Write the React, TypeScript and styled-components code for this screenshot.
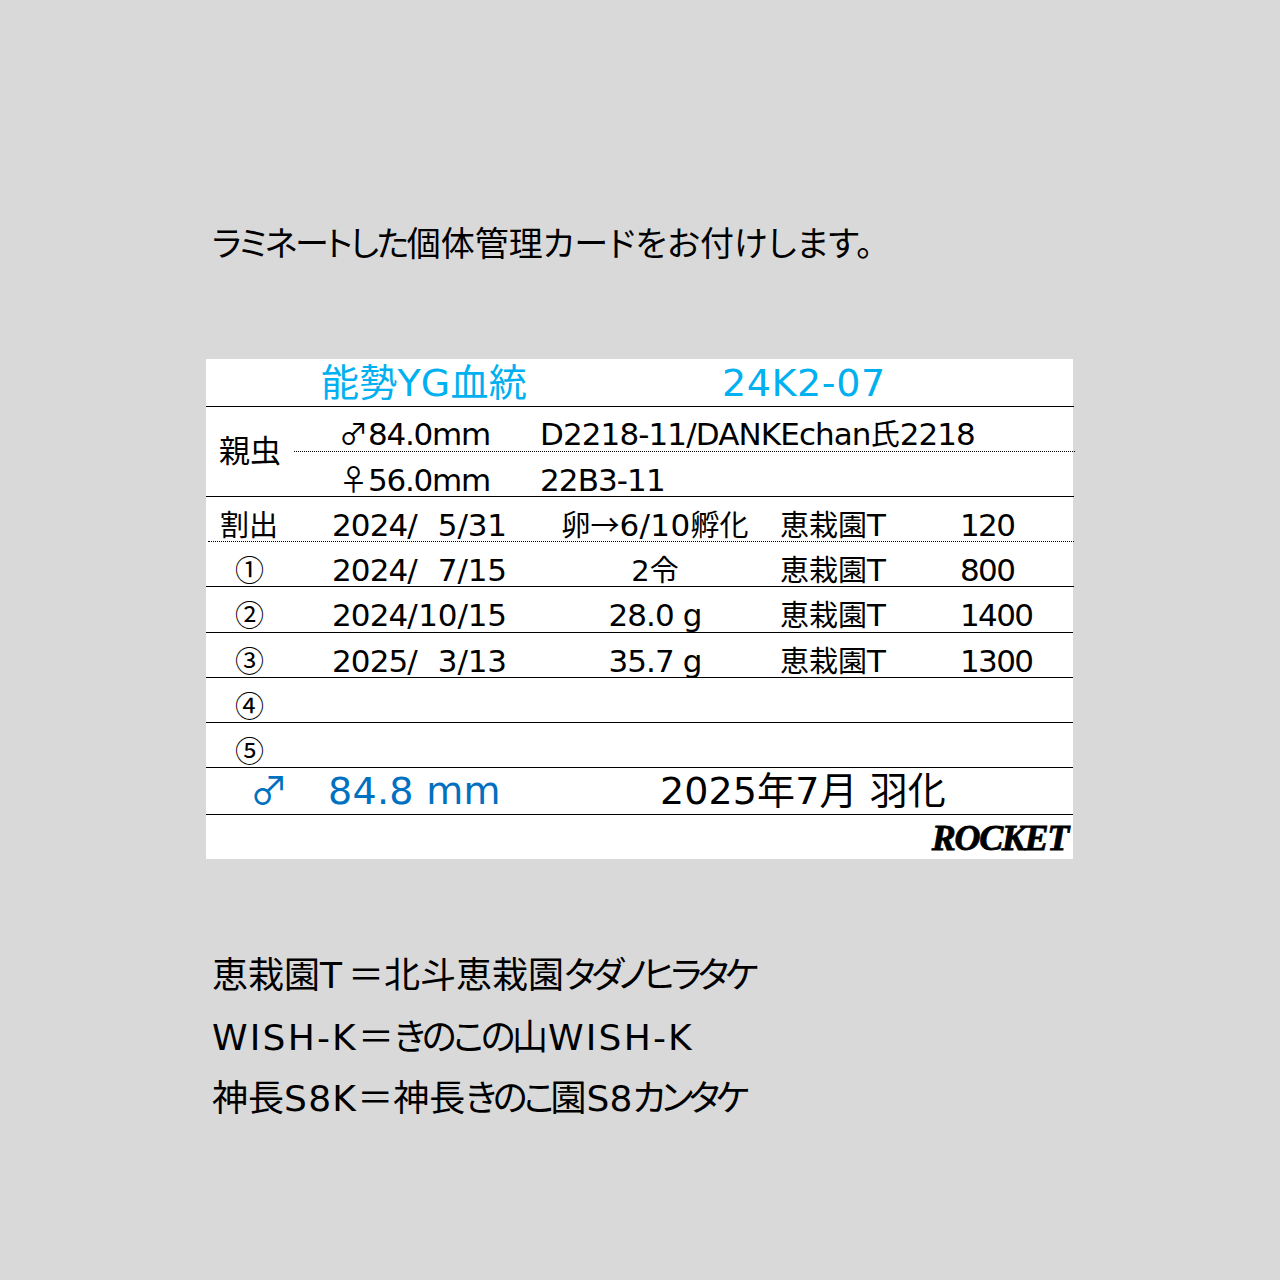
import React from "react";
import styled, { createGlobalStyle } from "styled-components";

const Global = createGlobalStyle`
  html, body { margin: 0; padding: 0; background: #d9d9d9; }
`;

const SANS = `"DejaVu Sans", "Noto Sans CJK JP", sans-serif`;
const CJK = `"Noto Sans CJK JP", sans-serif`;

const Page = styled.div`
  width: 1280px;
  height: 1280px;
  box-sizing: border-box;
  padding: 211px 0 0 206px;
  background: #d9d9d9;
  font-family: ${SANS};
  color: #000;
  overflow: hidden;
`;

const Heading = styled.div`
  padding-left: 6px;
  height: 148px;
  font-family: ${CJK};
  font-size: 34px;
  line-height: 62px;
  font-feature-settings: "palt";
  white-space: nowrap;
`;

const Spaced = styled.span<{ $gap: number }>`
  letter-spacing: ${(p) => p.$gap}px;
`;

const Card = styled.div`
  width: 867px;
  height: 500px;
  background: #fff;
  display: flex;
  flex-direction: column;
`;

const Rule = styled.div<{ $dotted?: boolean; $overhang?: boolean; $inset?: number }>`
  flex: none;
  box-sizing: border-box;
  margin-left: ${(p) => p.$inset ?? 0}px;
  margin-right: ${(p) => (p.$overhang ? -1 : 0)}px;
  border-bottom: 1px ${(p) => (p.$dotted ? "dotted" : "solid")} #000;
`;

const TitleRow = styled(Rule)`
  height: 48px;
  padding-top: 5px;
  display: grid;
  grid-template-columns: 516px 1fr;
  align-items: baseline;
  font-size: 38px;
  line-height: 38px;
  color: #00b0f0;
  white-space: nowrap;
`;

const Blood = styled.div`
  padding-left: 115px;
  letter-spacing: 0.2px;
`;

const Code = styled.div`
  letter-spacing: 0.6px;
`;

const ParentBlock = styled(Rule)`
  height: 90px;
  display: grid;
  grid-template-columns: 88px 1fr;
`;

const ParentLabel = styled.div`
  display: flex;
  align-items: center;
  padding-left: 13px;
  padding-bottom: 7px;
  font-family: ${CJK};
  font-size: 31px;
`;

const ParentLines = styled.div`
  display: flex;
  flex-direction: column;
`;

const ParentLine = styled.div<{ $dotted?: boolean; $top: number }>`
  height: 45px;
  box-sizing: border-box;
  padding-top: ${(p) => p.$top}px;
  margin-right: -1px;
  display: grid;
  grid-template-columns: 246px 1fr;
  align-items: baseline;
  font-size: 31px;
  line-height: 29px;
  letter-spacing: -0.9px;
  white-space: nowrap;
  ${(p) => (p.$dotted ? "border-bottom: 1px dotted #000;" : "")}
`;

const Measure = styled.div`
  padding-left: 45px;
  letter-spacing: -1.25px;
`;

const Sex = styled.span`
  font-family: ${CJK};
  font-size: 29px;
  letter-spacing: 0;
  display: inline-block;
  width: 29px;
`;

const Kanji = styled.span`
  font-size: 29px;
  letter-spacing: 0;
`;

const DataRow = styled(Rule)<{ $h: number; $inset?: number }>`
  height: ${(p) => p.$h}px;
  padding-top: 12px;
  display: grid;
  grid-template-columns: ${(p) => 127 - (p.$inset ?? 0)}px 228px 219px 180px 1fr;
  align-items: baseline;
  font-size: 29px;
  line-height: 29px;
  white-space: nowrap;
`;

const RowLabel = styled.div<{ $indent: number }>`
  padding-left: ${(p) => p.$indent}px;
  font-family: ${CJK};
`;

const DateCell = styled.div`
  display: flex;
  justify-content: space-between;
  width: 175px;
  margin-left: -1px;
`;

const Year = styled.span`
  font-size: 31px;
  letter-spacing: -0.9px;
`;

const Day = styled.span`
  font-size: 31px;
  letter-spacing: -0.1px;
`;

const Mid = styled.div`
  padding-right: 31px;
  text-align: center;
`;

const Digits = styled.span<{ $gap: number }>`
  font-size: 31px;
  letter-spacing: ${(p) => p.$gap}px;
`;

const Arrow = styled.span`
  font-family: ${CJK};
`;

const Count = styled.div`
  font-size: 31px;
  letter-spacing: -1.6px;
`;

const ResultRow = styled(Rule)`
  height: 47px;
  padding-top: 1px;
  display: grid;
  grid-template-columns: 122px 332px 1fr;
  align-items: baseline;
  font-size: 38px;
  line-height: 38px;
  white-space: nowrap;
`;

const ResultSex = styled.div`
  padding-left: 44px;
  color: #0070c0;
  font-family: ${CJK};
`;

const ResultSize = styled.div`
  color: #0070c0;
  letter-spacing: 0.3px;
`;

const ResultDate = styled.div`
  letter-spacing: 0.1px;
`;

const BrandRow = styled.div`
  flex: 1;
  display: flex;
  justify-content: flex-end;
  align-items: center;
  padding: 2px 5px 0 0;
`;

const Brand = styled.div`
  font-family: "Liberation Serif", serif;
  font-weight: 700;
  font-style: italic;
  font-size: 36px;
  line-height: 1;
  letter-spacing: -1.3px;
  -webkit-text-stroke: 0.8px #000;
`;

const Notes = styled.div`
  margin-top: 86px;
  padding-left: 6px;
  font-size: 36px;
  line-height: 61.5px;
  white-space: nowrap;
  font-feature-settings: "palt";
`;

const Note = styled.div`
  font-family: ${SANS};
`;

const rows = [
  { label: "①", date: ["2024/", "7/15"], mid: <>2<Kanji>令</Kanji></>, place: "恵栽園", num: "800", h: 45 },
  { label: "②", date: ["2024/", "10/15"], mid: <Digits $gap={-0.9}>28.0 g</Digits>, place: "恵栽園", num: "1400", h: 46 },
  { label: "③", date: ["2025/", "3/13"], mid: <Digits $gap={-0.9}>35.7 g</Digits>, place: "恵栽園", num: "1300", h: 45 },
  { label: "④", h: 45 },
  { label: "⑤", h: 45 },
];

export default function App() {
  return (
    <Page>
      <Global />
      <Heading>
        <Spaced $gap={-2.3}>ラミネートした</Spaced>
        個体管理
        <Spaced $gap={0.25}>カードをお付けします。</Spaced>
      </Heading>
      <Card>
        <TitleRow $overhang>
          <Blood>能勢YG血統</Blood>
          <Code>24K2-07</Code>
        </TitleRow>
        <ParentBlock $overhang>
          <ParentLabel>親虫</ParentLabel>
          <ParentLines>
            <ParentLine $dotted $top={11}>
              <Measure>
                <Sex>♂</Sex>84.0mm
              </Measure>
              <div>
                D2218-11/DANKEchan<Kanji>氏</Kanji>2218
              </div>
            </ParentLine>
            <ParentLine $top={12}>
              <Measure>
                <Sex>♀</Sex>56.0mm
              </Measure>
              <div>22B3-11</div>
            </ParentLine>
          </ParentLines>
        </ParentBlock>
        <DataRow $h={45} $dotted $overhang $inset={2}>
          <RowLabel $indent={12}>割出</RowLabel>
          <DateCell>
            <Year>2024/</Year>
            <Day>5/31</Day>
          </DateCell>
          <Mid>
            卵<Arrow>→</Arrow>
            <Digits $gap={0.3}>6/10</Digits>孵化
          </Mid>
          <div>
            恵栽園<Digits $gap={0}>T</Digits>
          </div>
          <Count>120</Count>
        </DataRow>
        {rows.map((r) => (
          <DataRow key={r.label} $h={r.h} $overhang={r.label === "①"}>
            <RowLabel $indent={29}>{r.label}</RowLabel>
            {r.date ? (
              <DateCell>
                <Year>{r.date[0]}</Year>
                <Day>{r.date[1]}</Day>
              </DateCell>
            ) : (
              <div />
            )}
            <Mid>{r.mid}</Mid>
            <div>
              {r.place}
              {r.place && <Digits $gap={0}>T</Digits>}
            </div>
            <Count>{r.num}</Count>
          </DataRow>
        ))}
        <ResultRow>
          <ResultSex>♂</ResultSex>
          <ResultSize>84.8 mm</ResultSize>
          <ResultDate>2025年7月 羽化</ResultDate>
        </ResultRow>
        <BrandRow>
          <Brand>ROCKET</Brand>
        </BrandRow>
      </Card>
      <Notes>
        <Note>
          恵栽園<Spaced $gap={6}>T</Spaced>＝北斗恵栽園<Spaced $gap={-4.3}>タダノヒラタケ</Spaced>
        </Note>
        <Note>
          <Spaced $gap={2.2}>WISH-K</Spaced>＝<Spaced $gap={-3.5}>きのこの</Spaced>山<Spaced $gap={2.2}>WISH-K</Spaced>
        </Note>
        <Note>
          神長<Spaced $gap={1.3}>S8K</Spaced>＝神長<Spaced $gap={-4}>きのこ</Spaced>園S8<Spaced $gap={-4.5}>カンタケ</Spaced>
        </Note>
      </Notes>
    </Page>
  );
}
